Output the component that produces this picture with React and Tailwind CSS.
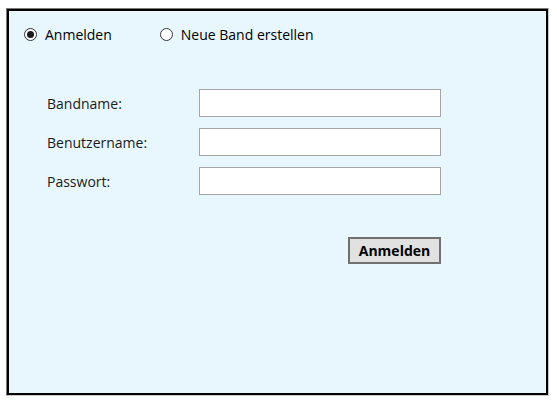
import { useState } from "react";

function Radio({ label, checked, onClick }) {
  return (
    <button
      type="button"
      onClick={onClick}
      className="flex items-center gap-[8px] text-[14px] text-black"
    >
      <span className="w-[13px] h-[13px] rounded-full border border-[#333] bg-white flex items-center justify-center">
        {checked && <span className="w-[7px] h-[7px] rounded-full bg-[#1a1a1a]" />}
      </span>
      <span>{label}</span>
    </button>
  );
}

function Feld({ label, type = "text" }) {
  return (
    <div className="flex items-center">
      <label className="w-[152px] text-[14px] text-[#1a1a1a]">{label}</label>
      <input
        type={type}
        className="w-[242px] h-[28px] bg-white border border-[#a5a5a5] outline-none px-1 text-[14px]"
      />
    </div>
  );
}

export default function App() {
  const [modus, setModus] = useState("login");

  return (
    <div
      className="w-[557px] h-[402px] bg-white pt-[8px] pl-[6px]"
      style={{ fontFamily: '"Open Sans", "Noto Sans", sans-serif' }}
    >
      <div className="w-[543px] h-[388px] border border-[#7a7a7a] border-r-[#c8c8c8] border-b-[#c8c8c8]">
        <div className="w-full h-full border-2 border-black bg-[#e8f7fe] flex flex-col">
          {/* AUSWAHL */}
          <div className="flex items-center gap-[48px] pl-[15px] pt-[13px]">
            <Radio label="Anmelden" checked={modus === "login"} onClick={() => setModus("login")} />
            <Radio label="Neue Band erstellen" checked={modus === "neu"} onClick={() => setModus("neu")} />
          </div>

          {/* FORMULAR */}
          <div className="flex flex-col gap-[11px] pl-[38px] mt-[44px]">
            <Feld label="Bandname:" />
            <Feld label="Benutzername:" />
            <Feld label="Passwort:" type="password" />
          </div>

          <div className="flex justify-start pl-[339px] mt-[42px]">
            <button className="w-[93px] h-[27px] bg-[#e1e1e1] border-2 border-[#707070] text-[14px] font-bold text-black">
              Anmelden
            </button>
          </div>
        </div>
      </div>
    </div>
  );
}
